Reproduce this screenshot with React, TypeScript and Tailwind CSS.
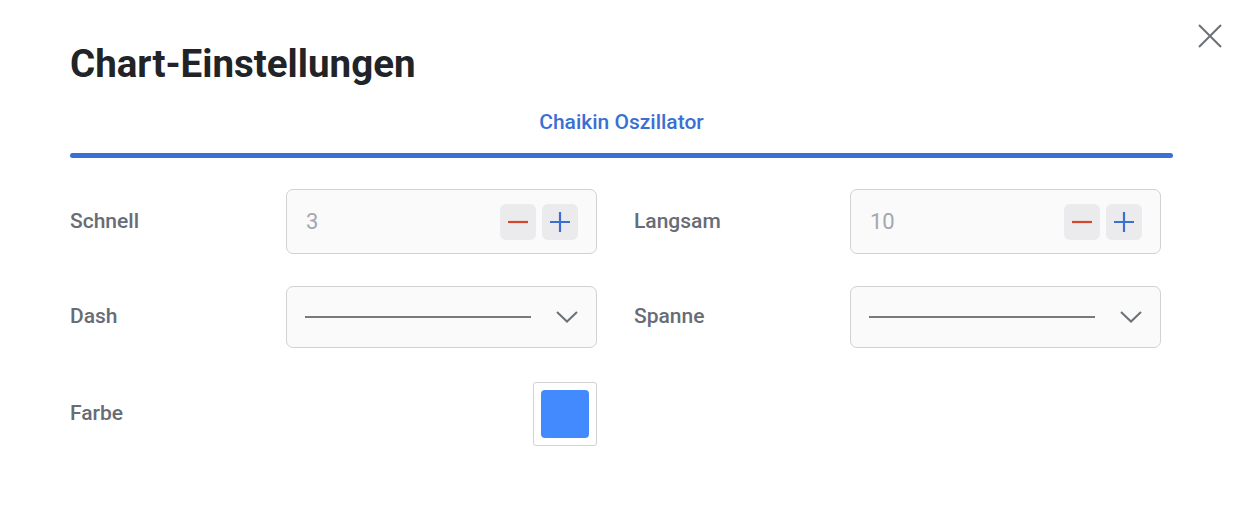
import React from "react";

const Stepper = ({ value }: { value: string }) => (
  <div className="flex h-[65px] w-[311px] items-center justify-between rounded-[7px] border border-[#d1d1d6] bg-[#fafafa] pl-[19px] pr-[18px]">
    <span className="text-[22px] text-[#a3a7ae]">{value}</span>
    <div className="flex gap-[6px]">
      <button className="flex h-[36px] w-[36px] items-center justify-center rounded-[6px] bg-[#ebebed]">
        <svg width="22" height="22" viewBox="0 0 22 22">
          <path d="M1 11h20" stroke="#d4472a" strokeWidth="2.2" />
        </svg>
      </button>
      <button className="flex h-[36px] w-[36px] items-center justify-center rounded-[6px] bg-[#ebebed]">
        <svg width="22" height="22" viewBox="0 0 22 22">
          <path d="M1 11h20M11 1v20" stroke="#3b6fd4" strokeWidth="2.2" />
        </svg>
      </button>
    </div>
  </div>
);

const LineSelect = () => (
  <div className="flex h-[62px] w-[311px] items-center rounded-[7px] border border-[#d1d1d6] bg-[#fafafa] pl-[18px] pr-[18px]">
    <div className="h-[2px] w-[226px] bg-[#7a7a7a]" />
    <div className="flex-1" />
    <svg width="22" height="12" viewBox="0 0 22 12">
      <path d="M1 1l10 9.5L21 1" fill="none" stroke="#6b7079" strokeWidth="2" />
    </svg>
  </div>
);

const Label = ({ children }: { children: React.ReactNode }) => (
  <div className="w-[216px] text-[21px] font-medium text-[#676c76]">{children}</div>
);

export default function App() {
  return (
    <div
      className="relative h-[524px] w-[1250px] bg-white"
      style={{ fontFamily: "Roboto, 'Liberation Sans', sans-serif" }}
    >
      <button className="absolute right-[27px] top-[23px]">
        <svg width="26" height="26" viewBox="0 0 26 26">
          <path d="M2 2l22 22M24 2L2 24" stroke="#6b7079" strokeWidth="2" />
        </svg>
      </button>
      <div className="px-[70px] pt-[40px] pr-[77px]">
        <h1 className="text-[38.5px] font-bold leading-[48px] text-[#212327]">Chart-Einstellungen</h1>
        <div className="mt-[20px] text-center text-[21px] font-medium leading-[28px] text-[#3b6fd4]">
          Chaikin Oszillator
        </div>
        <div className="mt-[17px] h-[5px] w-[1103px] rounded-full bg-[#3b6fd4]" />
        <div className="mt-[31px] flex flex-col">
          <div className="flex gap-[37px]">
            <div className="flex items-center">
              <Label>Schnell</Label>
              <Stepper value="3" />
            </div>
            <div className="flex items-center">
              <Label>Langsam</Label>
              <Stepper value="10" />
            </div>
          </div>
          <div className="mt-[32px] flex gap-[37px]">
            <div className="flex items-center">
              <Label>Dash</Label>
              <LineSelect />
            </div>
            <div className="flex items-center">
              <Label>Spanne</Label>
              <LineSelect />
            </div>
          </div>
          <div className="mt-[34px] flex items-center">
            <div className="w-[463px] text-[21px] font-medium text-[#676c76]">Farbe</div>
            <div className="flex h-[64px] w-[64px] items-center justify-center rounded-[3px] border border-[#d1d1d6] bg-white">
              <div className="h-[48px] w-[48px] rounded-[4px] bg-[#448aff]" />
            </div>
          </div>
        </div>
      </div>
    </div>
  );
}
